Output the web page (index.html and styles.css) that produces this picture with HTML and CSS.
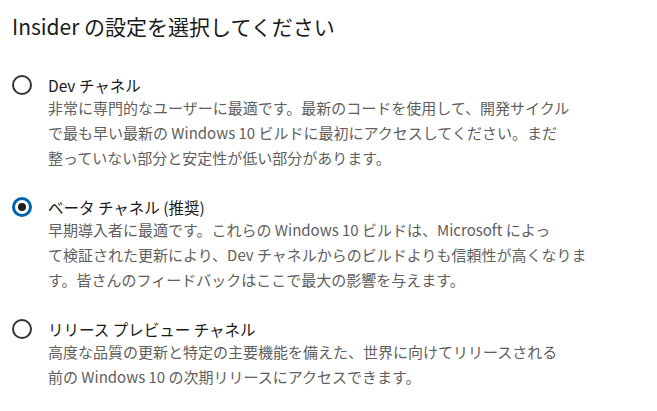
FILE: index.html
```html
<!DOCTYPE html>
<html lang="ja">
<head>
    <meta charset="UTF-8">
    <meta name="viewport" content="width=device-width, initial-scale=1.0">
    <title>Insider の設定</title>
    <link rel="stylesheet" href="styles.css">
</head>
<body>
    <h1 class="page-title">Insider の設定を選択してください</h1>

    <div class="options">
        <div class="option">
            <span class="radio"></span>
            <div class="option-text">
                <div class="option-title">Dev チャネル</div>
                <div class="option-desc">非常に専門的なユーザーに最適です。最新のコードを使用して、開発サイクル<br>で最も早い最新の Windows 10 ビルドに最初にアクセスしてください。まだ<br>整っていない部分と安定性が低い部分があります。</div>
            </div>
        </div>

        <div class="option">
            <span class="radio checked"></span>
            <div class="option-text">
                <div class="option-title">ベータ チャネル (推奨)</div>
                <div class="option-desc">早期導入者に最適です。これらの Windows 10 ビルドは、Microsoft によっ<br>て検証された更新により、Dev チャネルからのビルドよりも信頼性が高くなりま<br>す。皆さんのフィードバックはここで最大の影響を与えます。</div>
            </div>
        </div>

        <div class="option">
            <span class="radio"></span>
            <div class="option-text">
                <div class="option-title">リリース プレビュー チャネル</div>
                <div class="option-desc">高度な品質の更新と特定の主要機能を備えた、世界に向けてリリースされる<br>前の Windows 10 の次期リリースにアクセスできます。</div>
            </div>
        </div>
    </div>
</body>
</html>
```

FILE: styles.css
```css
body {
    margin: 0;
    padding: 10px 12px;
    background: #fff;
    font-family: "Noto Sans CJK JP", sans-serif;
    color: #1a1a1a;
}
.page-title {
    margin: 0;
    font-size: 21px;
    font-weight: normal;
    line-height: 32px;
}
.options {
    margin-top: 33px;
    display: flex;
    flex-direction: column;
    gap: 27px;
}
.option {
    display: flex;
    align-items: flex-start;
    gap: 16px;
}
.radio {
    flex: none;
    width: 20px;
    height: 20px;
    box-sizing: border-box;
    border: 2px solid #333;
    border-radius: 50%;
    display: flex;
    align-items: center;
    justify-content: center;
}
.radio.checked {
    border: 3px solid #0063b1;
}
.radio.checked::after {
    content: "";
    width: 8px;
    height: 8px;
    border-radius: 50%;
    background: #1f1f1f;
}
.option-title {
    font-size: 15.5px;
    line-height: 20px;
    color: #1a1a1a;
}
.option-desc {
    font-size: 15px;
    line-height: 25px;
    color: #606060;
    white-space: nowrap;
}
```
